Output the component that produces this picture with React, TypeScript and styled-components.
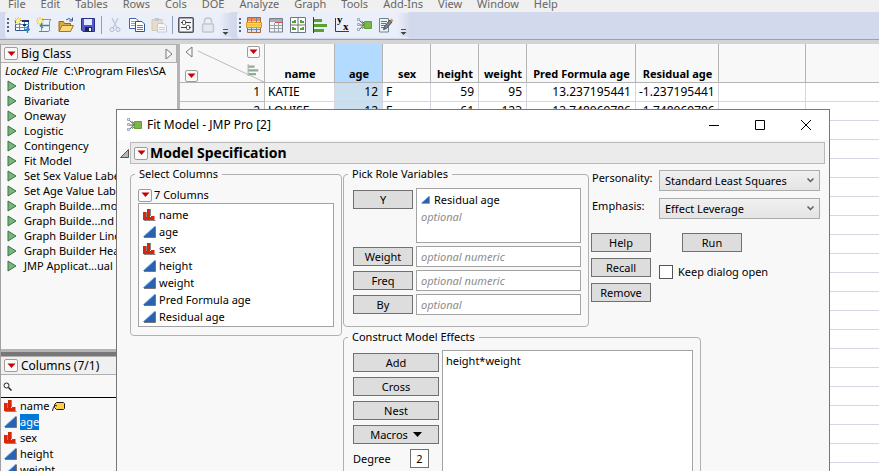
import React from "react";
import styled, { createGlobalStyle, css } from "styled-components";

const GlobalStyle = createGlobalStyle`
  * { box-sizing: border-box; }
  body { margin: 0; }
  body, button, input, select {
    font-family: "Noto Sans", "Open Sans", sans-serif;
    font-size: 11px;
    line-height: 16px;
    color: #000;
  }
  ul { margin: 0; padding: 0; list-style: none; }
  svg { display: block; flex: none; }
`;

const Page = styled.div`
  position: relative;
  display: flex;
  flex-direction: column;
  height: 100vh;
  overflow: hidden;
  background: #fff;
`;

const MenuBar = styled.nav`
  display: flex;
  align-items: flex-end;
  flex: none;
  gap: 3px;
  height: 12px;
  padding-left: 2px;
  background: #f0f0f0;
`;

const MenuItem = styled.button`
  flex: none;
  padding: 0 6px;
  border: 0;
  background: none;
  color: #666;
  white-space: nowrap;
`;

const ToolBar = styled.div`
  display: flex;
  flex: none;
  gap: 5px;
  height: 32px;
  padding-left: 5px;
  background: #d3d9ec;
  border-bottom: 4px solid #d4d4d4;
  box-shadow: inset 0 -1px 0 #92a0c6;
`;

const ToolGroup = styled.div`
  display: flex;
  align-items: center;
  height: 26px;
  background: #ebeff9;
  border-radius: 3px;
`;

const ToolButton = styled.button`
  display: flex;
  align-items: center;
  justify-content: center;
  width: 22px;
  height: 24px;
  padding: 0;
  border: 0;
  background: none;
`;

const Separator = styled.span`
  width: 1px;
  height: 18px;
  margin: 0 2px;
  background: #8e9cbe;
`;

const OverflowButton = styled(ToolButton)`
  width: 13px;
  align-items: flex-end;
  background: linear-gradient(90deg, #ebeff9, #d3d9ec);
`;

const Workspace = styled.div`
  display: flex;
  flex: 1;
  min-height: 0;
`;

const SideBar = styled.aside`
  display: flex;
  flex-direction: column;
  flex: none;
  width: 180px;
  border-left: 1px solid #a0a0a0;
  border-right: 3px solid #b4b4b4;
  background: #f8f8f8;
`;

const PanelHeader = styled.div`
  display: flex;
  align-items: center;
  flex: none;
  gap: 3px;
  height: 19px;
  padding: 0 3px 0 3px;
  border: 1px solid #b0b0b0;
  border-left: 0;
  background: #f0f0f0;
  font-size: 12px;
  white-space: nowrap;
`;

const Spacer = styled.span`
  flex: 1;
`;

const DropButton = styled.button<{ $large?: boolean }>`
  display: flex;
  align-items: center;
  justify-content: center;
  flex: none;
  width: ${(p) => (p.$large ? 14 : 13)}px;
  height: ${(p) => (p.$large ? 13 : 12)}px;
  padding: 0;
  border: 1px solid #9c9c9c;
  border-radius: 2px;
  background: #fafafa;
`;

const ScriptPanel = styled.section`
  flex: 1;
  min-height: 0;
  overflow: hidden;
  white-space: nowrap;
`;

const SourceLine = styled.div`
  display: flex;
  gap: 6px;
  height: 15px;
  padding-left: 4px;
`;

const ScriptItem = styled.li`
  display: flex;
  align-items: center;
  gap: 7px;
  height: 15px;
  padding-left: 6px;
`;

const Splitter = styled.div`
  flex: none;
  height: 7px;
  border-top: 3px solid #b4b4b4;
  background: #777;
`;

const ColumnPanel = styled.section`
  flex: none;
  height: 115px;
  overflow: hidden;
`;

const SearchRow = styled.label`
  display: flex;
  align-items: center;
  height: 23px;
  padding-left: 2px;
  border-bottom: 1px solid #000;
`;

const SearchInput = styled.input`
  flex: 1;
  min-width: 0;
  border: 0;
  outline: 0;
  background: none;
`;

const ColumnItem = styled.li<{ $tall?: boolean }>`
  display: flex;
  align-items: center;
  gap: 3px;
  height: ${(p) => (p.$tall ? 17 : 16)}px;
  padding-left: ${(p) => (p.$tall ? 4 : 3)}px;
`;

const ColumnName = styled.span<{ $selected?: boolean }>`
  ${(p) => p.$selected && css`background: #0078d7; color: #fff;`}
`;

const GridPane = styled.main`
  flex: 1;
  min-width: 0;
  overflow: hidden;
`;

const DataTable = styled.table`
  width: 100%;
  table-layout: fixed;
  border-collapse: separate;
  border-spacing: 0;
`;

const Col = styled.col<{ $w?: number }>`
  width: ${(p) => (p.$w ? `${p.$w}px` : "auto")};
`;

const HeadCell = styled.th<{ $active?: boolean; $last?: boolean }>`
  height: 39px;
  padding: 0 0 0 1px;
  vertical-align: bottom;
  font-size: 11px;
  font-weight: 700;
  white-space: nowrap;
  border-bottom: 1px solid #b4b4b4;
  border-right: ${(p) => (p.$last ? 0 : 1)}px solid #b4b4b4;
  background: ${(p) => (p.$active ? "#b3dbff" : "#f8f8f8")};
`;

const CornerCell = styled(HeadCell)`
  position: relative;
`;

const CornerLayout = styled.div`
  display: flex;
  justify-content: space-between;
  height: 38px;
  padding: 2px 4px 0;
`;

const CornerSide = styled.div`
  display: flex;
  flex-direction: column;
  justify-content: space-between;
`;

const Diagonal = styled.svg`
  position: absolute;
  inset: 0;
  width: 100%;
  height: 100%;
  pointer-events: none;
`;

const Cell = styled.td<{ $text?: boolean; $active?: boolean; $last?: boolean }>`
  height: 19px;
  padding: 0 4px 0 3px;
  font-size: 12px;
  line-height: 18px;
  text-align: ${(p) => (p.$text ? "left" : "right")};
  white-space: nowrap;
  border-bottom: 1px solid #d6d6e0;
  border-right: ${(p) => (p.$last ? 0 : 1)}px solid #d6d6e0;
  background: ${(p) => (p.$active ? "#cbdfef" : "#fff")};
`;

const RowNumber = styled(Cell)`
  background: #f8f8f8;
  border-color: #bcbcbc;
`;

const Dialog = styled.section`
  position: absolute;
  top: 109px;
  left: 116px;
  right: 49px;
  bottom: 0;
  display: flex;
  flex-direction: column;
  border: 1px solid #767676;
  border-bottom: 0;
  background: #f8f8f8;
  overflow: hidden;
`;

const TitleBar = styled.header`
  display: flex;
  align-items: center;
  flex: none;
  height: 30px;
  padding-left: 9px;
  background: #fff;
`;

const Title = styled.span`
  flex: 1;
  padding-left: 5px;
  font-size: 12px;
`;

const WindowButton = styled.button`
  display: flex;
  align-items: center;
  justify-content: center;
  width: 46px;
  height: 30px;
  padding: 0;
  border: 0;
  background: none;
`;

const HeadingRow = styled.div`
  display: flex;
  align-items: center;
  flex: none;
  gap: 1px;
  padding: 2px 4px 0 3px;
`;

const Heading = styled.h1`
  display: flex;
  align-items: center;
  flex: 1;
  gap: 2px;
  height: 22px;
  margin: 0;
  padding-left: 3px;
  border: 1px solid #b9b9b9;
  background: #ebebeb;
  font-size: 14px;
  line-height: 20px;
`;

const Form = styled.form`
  display: flex;
  align-items: flex-start;
  gap: 1px;
  padding: 2px 9px 0 13px;
`;

const MainColumn = styled.div`
  flex: 1;
  min-width: 0;
`;

const TopRow = styled.div`
  display: flex;
  gap: 2px;
  margin-bottom: 2px;
`;

const Group = styled.fieldset<{ $w: number; $h: number }>`
  flex: none;
  width: ${(p) => p.$w}px;
  height: ${(p) => p.$h}px;
  min-width: 0;
  margin: 0;
  padding: 0 7px;
  border: 1px solid #b0b0b0;
  border-radius: 4px;
`;

const Legend = styled.legend`
  padding: 0 4px;
  margin-left: -3px;
`;

const CountRow = styled.div`
  display: flex;
  align-items: center;
  gap: 2px;
  height: 21px;
  padding: 5px 0 0 0;
`;

const listFrame = css`
  border: 1px solid #a3a3a3;
  background: #fff;
`;

const ColumnList = styled.ul`
  ${listFrame}
  height: 124px;
  padding-top: 2px;
`;

const RoleGrid = styled.div`
  display: grid;
  grid-template-columns: 60px 1fr;
  gap: 3px;
  align-items: center;
  padding: 6px 0 0 2px;
`;

const Button = styled.button<{ $top?: boolean }>`
  display: flex;
  align-items: center;
  justify-content: center;
  gap: 5px;
  width: 100%;
  height: 19px;
  padding: 0;
  border: 1px solid #707070;
  background: #ddd;
  ${(p) => p.$top && css`align-self: start; margin-top: 2px;`}
`;

const RoleList = styled.ul`
  ${listFrame}
  height: 55px;
  padding: 2px 0 0 4px;
`;

const RoleItem = styled.li<{ $hint?: boolean }>`
  display: flex;
  align-items: center;
  gap: 4px;
  height: 17px;
  ${(p) => p.$hint && css`font-style: italic; color: #8c8c8c;`}
`;

const RoleInput = styled.input`
  ${listFrame}
  width: 100%;
  height: 21px;
  padding: 0 4px;
  &::placeholder { font-style: italic; color: #8c8c8c; opacity: 1; }
`;

const EffectsLayout = styled.div`
  display: flex;
  align-items: flex-start;
  gap: 3px;
  padding: 5px 0 0 2px;
`;

const EffectButtons = styled.div`
  display: flex;
  flex-direction: column;
  gap: 5px;
  width: 86px;
  padding-top: 3px;
`;

const DegreeRow = styled.label`
  display: flex;
  align-items: center;
  justify-content: space-between;
  padding-right: 10px;
`;

const DegreeInput = styled.input`
  ${listFrame}
  border-color: #707070;
  width: 19px;
  height: 19px;
  padding: 0;
  text-align: center;
`;

const EffectsList = styled.ul`
  ${listFrame}
  flex: 1;
  height: 180px;
  padding: 2px 3px;
`;

const Controls = styled.div`
  display: flex;
  flex-direction: column;
  flex: 1;
  min-width: 0;
  padding-top: 4px;
`;

const ChoiceRow = styled.label`
  display: grid;
  grid-template-columns: 66px 1fr;
  gap: 1px;
  height: 28px;
  padding-left: 1px;
`;

const SelectWrap = styled.span`
  display: grid;
  height: 21px;
  & > * { grid-area: 1 / 1; }
  & > svg { align-self: center; justify-self: end; margin-right: 6px; pointer-events: none; }
`;

const Select = styled.select`
  appearance: none;
  width: 100%;
  height: 21px;
  padding: 0 16px 0 5px;
  border: 1px solid #acacac;
  border-radius: 0;
  background: linear-gradient(#f0f0f0, #e4e4e4);
`;

const ActionRow = styled.div`
  display: flex;
  align-items: flex-start;
  padding-top: 7px;
`;

const ActionColumn = styled.div<{ $wide?: boolean }>`
  display: flex;
  flex-direction: column;
  gap: ${(p) => (p.$wide ? 10 : 6)}px;
  width: ${(p) => (p.$wide ? "auto" : "60px")};
  margin-left: ${(p) => (p.$wide ? 8 : 0)}px;
`;

const RunSlot = styled.div`
  width: 60px;
  margin-left: 23px;
`;

const CheckLabel = styled.label`
  display: flex;
  align-items: center;
  gap: 5px;
  height: 20px;
  white-space: nowrap;
`;

const CheckBox = styled.input`
  appearance: none;
  width: 14px;
  height: 14px;
  margin: 0;
  border: 1px solid #555;
  background: #fff;
  &:checked { background: #555; }
`;

const RedTriangle = () => (
  <svg width="9" height="6" viewBox="0 0 9 6"><path d="M0.5 0.5H8.5L4.5 5Z" fill="#c80000" /></svg>
);

const NominalIcon = () => (
  <svg width="13" height="12" viewBox="0 0 13 12">
    <path d="M1 11H12.500V12H1Z" fill="#888" />
    <path d="M0 3H3V11H0ZM4 0H7V11H4ZM8 7H11.500V11H8ZM3 8H8V11H3Z" fill="#d92606" />
    <path d="M3.500 3V8M7.500 0V7" stroke="#888" />
  </svg>
);

const ContinuousIcon = ({ size = 12 }: { size?: number }) => (
  <svg width={size + 1} height={size} viewBox="0 0 13 12">
    <path d="M1 11.500H12.500V0.500" fill="none" stroke="#777" />
    <path d="M0 11L12 0V11Z" fill="#2a62b2" />
    <path d="M0.500 10.500L11.500 0.500" stroke="#7db0ea" />
  </svg>
);

const PlayIcon = () => (
  <svg width="10" height="12" viewBox="0 0 10 12">
    <path d="M1 1L9 6L1 11Z" fill="#74b87a" stroke="#41704a" />
  </svg>
);

const HollowTriangle = ({ flip }: { flip?: boolean }) => (
  <svg width="8" height="12" viewBox="0 0 8 12">
    <path d={flip ? "M7 1V11L1 6Z" : "M1 1V11L7 6Z"} fill="#f8f8f8" stroke="#777" />
  </svg>
);

const FitIcon = () => (
  <svg width="16" height="16" viewBox="0 0 16 16">
    <path d="M3 3L8 7.500L3 13M3 8H9M6 4.500L9 7M6 11.500L9 9" fill="none" stroke="#555" />
    <path d="M1.500 1.500h2v2h-2zM1.500 6.500h2v2h-2zM1.500 11.500h2v2h-2z" fill="#eef2fb" stroke="#9aa9c8" />
    <path d="M8.500 4.500H15.500V11.500H8.500Z" fill="#7ab648" stroke="#5ea033" />
  </svg>
);

const BarsIcon = ({ muted }: { muted?: boolean }) => (
  <svg width={muted ? 12 : 16} height={muted ? 12 : 16} viewBox="0 0 16 16">
    <path d="M1.500 0V16" stroke={muted ? "#8290a4" : "#253a5e"} strokeWidth="1" />
    <path d="M2 2H10V5H2ZM2 7H15V10H2ZM2 12H12V15H2Z" fill={muted ? "#91ac94" : "#5aa02c"} />
  </svg>
);

const Sparkle = () => (
  <>
    <path d="M4 0V8M0 4H8M1 1L7 7M7 1L1 7" stroke="#eec22c" />
    <circle cx="4" cy="4" r="2" fill="#fff3a0" />
  </>
);

const ToolSvg = ({ children }: { children: React.ReactNode }) => (
  <svg width="16" height="16" viewBox="0 0 16 16" fill="none">{children}</svg>
);

const NewTableIcon = () => (
  <ToolSvg>
    <path d="M1.500 3.500H14.500V13.500H1.500Z" fill="#fff" stroke="#35588c" />
    <path d="M1 7.500H15M1 10.500H15M5.500 3V13M10.500 3V13" stroke="#5f8cc6" />
    <path d="M8 3H15V5H8ZM9 7H12V9H9Z" fill="#20365f" />
    <path d="M10 12.500H16M13.500 9V16" stroke="#1e8fd0" strokeWidth="1.500" />
    <Sparkle />
  </ToolSvg>
);
const NewScriptIcon = () => (
  <ToolSvg>
    <path d="M5.500 2.500H15Q13 4 13.500 6V13Q13.500 14.500 12 14.500H5.500Z" fill="#eef3fa" stroke="#8394ae" />
    <path d="M4 8.500H13M4 8.500L7 6M4 8.500L7 11" stroke="#3c82a8" strokeWidth="1.500" />
    <path d="M3 14.500H12" stroke="#6f7f96" />
    <Sparkle />
  </ToolSvg>
);
const OpenIcon = () => (
  <ToolSvg>
    <path d="M1 14V4.500H5.500L6.500 6.500H12.500V14Z" fill="#d9aa3c" stroke="#8f6c1c" />
    <path d="M1 14.500L4 8.500H15.500L12.500 14.500Z" fill="#fbd97c" stroke="#a27720" />
    <path d="M8 3Q11 0 14 3M14.500 0.500V4H11" stroke="#39608f" />
  </ToolSvg>
);
const SaveIcon = () => (
  <ToolSvg>
    <path d="M1.500 1.500H14.500V14.500H3L1.500 13Z" fill="#5357c9" stroke="#2b2e86" />
    <path d="M4 2H12V8H4Z" fill="#e6e9fb" />
    <path d="M5 10H12V14.500H5Z" fill="#202450" />
    <path d="M9 11H11V14H9Z" fill="#fff" />
  </ToolSvg>
);
const CutIcon = () => (
  <ToolSvg>
    <path d="M5 1L10 11M11 1L6 11" stroke="#c3cbd9" strokeWidth="1.500" />
    <circle cx="5" cy="12.500" r="2" stroke="#a9b9d6" />
    <circle cx="11" cy="12.500" r="2" stroke="#a9b9d6" />
  </ToolSvg>
);
const CopyIcon = () => (
  <ToolSvg>
    <path d="M0.500 1.500H7L9.500 4V11.500H0.500Z" fill="#fff" stroke="#3e68a8" />
    <path d="M2 4.500H7M2 6.500H7M2 8.500H6" stroke="#7fa3d6" />
    <path d="M6.500 4.500H13L15.500 7V14.500H6.500Z" fill="#fff" stroke="#2c5597" />
    <path d="M8 8.500H14M8 10.500H14M8 12.500H14" stroke="#4d7cc0" />
  </ToolSvg>
);
const PasteIcon = () => (
  <ToolSvg>
    <path d="M1 2.500H11V13.500H1Z" fill="#e6dccb" stroke="#d2c8b6" />
    <path d="M4 1H8V4H4Z" fill="#c3c7d0" />
    <path d="M6.500 6.500H13L15.500 9V15H6.500Z" fill="#f4f6fa" stroke="#c2cad8" />
    <path d="M8 10.500H14M8 12.500H14" stroke="#c6cedc" />
  </ToolSvg>
);
const SettingsIcon = () => (
  <ToolSvg>
    <rect x="0.750" y="0.750" width="14.500" height="14.500" rx="1" fill="#f4f5f8" stroke="#53565c" strokeWidth="1.500" />
    <path d="M3 5.500H13M3 10.500H13" stroke="#444" />
    <rect x="4.500" y="3.500" width="3" height="4" rx="1" fill="#fff" stroke="#444" />
    <rect x="8.500" y="8.500" width="3" height="4" rx="1" fill="#fff" stroke="#444" />
  </ToolSvg>
);
const LockIcon = () => (
  <ToolSvg>
    <path d="M4.500 7V4Q4.500 1 8 1T11.500 4V7" stroke="#c2c6d0" strokeWidth="1.500" />
    <rect x="2.500" y="7" width="11" height="8" rx="1" fill="#e6e8ef" stroke="#c2c6d0" strokeWidth="1.500" />
  </ToolSvg>
);
const SummaryIcon = () => (
  <ToolSvg>
    <path d="M1.500 0.500H14.500V15.500H1.500Z" fill="#dbe5f5" stroke="#a46a3c" />
    <path d="M2 1H14V4H2Z" fill="#ee8a62" />
    <path d="M5.500 1V15M10.500 1V15M2 12.500H14" stroke="#6389bb" />
    <path d="M0.500 5.500H15.500V10.500H0.500Z" fill="#ffd84e" stroke="#dc9a1c" />
    <path d="M1 8H15" stroke="#f6a540" />
  </ToolSvg>
);
const TabulateIcon = () => (
  <ToolSvg>
    <path d="M1.500 1.500H14.500V15H1.500Z" fill="#f3f4f7" stroke="#777d88" />
    <path d="M2 2H14V5H2Z" fill="#a7adb8" />
    <path d="M7 5.500H14" stroke="#c8564a" />
    <path d="M2 8.500H14M2 11.500H14M6.500 6V15M10.500 6V15" stroke="#9ba1ab" />
  </ToolSvg>
);
const GraphBuilderIcon = () => (
  <ToolSvg>
    <path d="M0.500 0.500H15.500V15.500H0.500ZM8 0.500V15.500M0.500 8H15.500" fill="#fff" stroke="#6d7580" />
    <path d="M2 6V4H4V3H6V6ZM10 6V3H12V4H14V6ZM2 13V10H4V11H6V13ZM10 13V11H12V10H14V13Z" fill="#5aa02c" />
  </ToolSvg>
);
const AxisText = styled.text`
  font: 700 11px "Liberation Serif", serif;
`;
const FitYXIcon = () => (
  <ToolSvg>
    <path d="M1.500 1V14.500H15" stroke="#2c3e66" />
    <AxisText x="3" y="6" fill="#000">y</AxisText>
    <AxisText x="9" y="13" fill="#000">x</AxisText>
  </ToolSvg>
);
const ScriptEditIcon = () => (
  <ToolSvg>
    <path d="M1.500 1.500H10.500V15H1.500Z" fill="#eef3f7" stroke="#6b8796" />
    <path d="M3 4.500H9M3 6.500H8M3 8.500H7M3 10.500H6" stroke="#4d7f94" />
    <path d="M5.500 12.500L6.500 9.500L12 3L14 5L8.500 11.500Z" fill="#7d8490" stroke="#4a505b" />
    <path d="M12 3L13.500 1.500L15.500 3.500L14 5Z" fill="#e89a35" />
  </ToolSvg>
);
const GripIcon = () => (
  <svg width="6" height="16" viewBox="0 0 6 16">
    <path d="M3 1V15" stroke="#5b6478" strokeWidth="2" strokeDasharray="2 2" />
  </svg>
);
const OverflowIcon = () => (
  <svg width="7" height="8" viewBox="0 0 7 8">
    <path d="M1 0.500H6" stroke="#555" />
    <path d="M0.500 3H6.500L3.500 6Z" fill="#444" />
  </svg>
);
const SearchIcon = () => (
  <svg width="9" height="9" viewBox="0 0 9 9">
    <circle cx="3.500" cy="3.500" r="2.500" fill="none" stroke="#222" />
    <path d="M5.500 5.500L8.500 8.500" stroke="#222" strokeWidth="1.500" />
  </svg>
);
const LabelIcon = () => (
  <svg width="13" height="11" viewBox="0 0 13 11">
    <path d="M4.500 1.500H11.500L12.500 2.500V7.500L11.500 8.500H4.500L2.500 6.500V3.500Z" fill="#ffd044" stroke="#1c1c1c" />
    <path d="M5 5L3 4Q1 6 0.500 10" fill="none" stroke="#222" />
  </svg>
);
const Chevron = () => (
  <svg width="7" height="5" viewBox="0 0 7 5"><path d="M0.500 0.500L3.500 3.500L6.500 0.500" fill="none" stroke="#5c5c5c" strokeWidth="1.500" /></svg>
);

const menus = ["File", "Edit", "Tables", "Rows", "Cols", "DOE", "Analyze", "Graph", "Tools", "Add-Ins", "View", "Window", "Help"];

const scripts = [
  "Distribution", "Bivariate", "Oneway", "Logistic", "Contingency", "Fit Model",
  "Set Sex Value Labels", "Set Age Value Labels", "Graph Builde...mooth", "Graph Builde...nd Bar",
  "Graph Builder Line", "Graph Builder Heat", "JMP Applicat...ual",
];

type Column = { name: string; nominal?: boolean };
const columns: Column[] = [
  { name: "name", nominal: true },
  { name: "age" },
  { name: "sex", nominal: true },
  { name: "height" },
  { name: "weight" },
  { name: "Pred Formula age" },
  { name: "Residual age" },
];

const rows = [
  ["KATIE", "12", "F", "59", "95", "13.237195441", "-1.237195441"],
  ["LOUISE", "12", "F", "61", "123", "13.748069786", "-1.748069786"],
];
const gridWidths = [85, 70, 48, 48, 48, 48, 109, 83, 87];
const blankRows = Array.from({ length: 19 }, (_, i) => i);

type Tool = [string, () => React.ReactElement];
const fileTools: Tool[] = [["New table", NewTableIcon], ["New script", NewScriptIcon], ["Open", OpenIcon], ["Save", SaveIcon]];
const editTools: Tool[] = [["Cut", CutIcon], ["Copy", CopyIcon], ["Paste", PasteIcon]];
const tableTools: Tool[] = [["Settings", SettingsIcon], ["Lock", LockIcon]];
const analyzeTools: Tool[] = [
  ["Summary", SummaryIcon], ["Tabulate", TabulateIcon], ["Graph Builder", GraphBuilderIcon], ["Distribution", BarsIcon],
  ["Fit Y by X", FitYXIcon], ["Fit Model", FitIcon], ["Edit script", ScriptEditIcon],
];

const Tools = ({ items }: { items: Tool[] }) => (
  <>
    {items.map(([label, Icon]) => (
      <ToolButton key={label} aria-label={label}><Icon /></ToolButton>
    ))}
  </>
);

const Drop = ({ label, large }: { label: string; large?: boolean }) => (
  <DropButton type="button" aria-label={label} $large={large}><RedTriangle /></DropButton>
);

const TypeIcon = ({ nominal }: { nominal?: boolean }) => (nominal ? <NominalIcon /> : <ContinuousIcon />);

const DataGrid = () => (
  <GridPane>
    <DataTable>
      <colgroup>
        {gridWidths.map((w, i) => <Col key={i} $w={w} />)}
        <Col />
      </colgroup>
      <thead>
        <tr>
          <CornerCell>
            <Diagonal viewBox="0 0 84 38" preserveAspectRatio="none"><path d="M18 7L84 38" stroke="#bbb" /></Diagonal>
            <CornerLayout>
              <CornerSide><HollowTriangle flip /><Drop label="Row menu" /></CornerSide>
              <CornerSide><Drop label="Column menu" /><BarsIcon muted /><span /></CornerSide>
            </CornerLayout>
          </CornerCell>
          {columns.map((c) => <HeadCell key={c.name} $active={c.name === "age"}>{c.name}</HeadCell>)}
          <HeadCell />
          <HeadCell $last />
        </tr>
      </thead>
      <tbody>
        {rows.map((r, i) => (
          <tr key={i}>
            <RowNumber>{i + 1}</RowNumber>
            {r.map((v, j) => <Cell key={j} $text={j === 0 || j === 2} $active={j === 1}>{v}</Cell>)}
            <Cell />
            <Cell $last />
          </tr>
        ))}
        {blankRows.map((i) => (
          <tr key={i}>
            <RowNumber />
            {columns.map((c) => <Cell key={c.name} $active={c.name === "age"} />)}
            <Cell />
            <Cell $last />
          </tr>
        ))}
      </tbody>
    </DataTable>
  </GridPane>
);

const FitModelDialog = () => (
  <Dialog role="dialog" aria-label="Fit Model">
    <TitleBar>
      <FitIcon />
      <Title>Fit Model - JMP Pro [2]</Title>
      <WindowButton aria-label="Minimize">
        <svg width="10" height="10" viewBox="0 0 10 10"><path d="M0 5.500H10" stroke="#000" /></svg>
      </WindowButton>
      <WindowButton aria-label="Maximize">
        <svg width="10" height="10" viewBox="0 0 10 10"><path d="M0.500 0.500H9.500V9.500H0.500Z" fill="none" stroke="#000" /></svg>
      </WindowButton>
      <WindowButton aria-label="Close">
        <svg width="10" height="10" viewBox="0 0 10 10"><path d="M0 0L10 10M10 0L0 10" stroke="#000" /></svg>
      </WindowButton>
    </TitleBar>
    <HeadingRow>
      <svg width="9" height="9" viewBox="0 0 9 9"><path d="M8.500 0.500V8.500H0.500Z" fill="#b5b5b5" stroke="#555" /></svg>
      <Heading><Drop label="Model menu" large />Model Specification</Heading>
    </HeadingRow>
    <Form onSubmit={(e) => e.preventDefault()}>
      <Group $w={212} $h={170}>
        <Legend>Select Columns</Legend>
        <CountRow><Drop label="Columns menu" large />7 Columns</CountRow>
        <ColumnList>
          {columns.map((c) => (
            <ColumnItem key={c.name} $tall>
              <TypeIcon nominal={c.nominal} />
              <ColumnName>{c.name}</ColumnName>
            </ColumnItem>
          ))}
        </ColumnList>
      </Group>
      <MainColumn>
        <TopRow>
          <Group $w={246} $h={161}>
            <Legend>Pick Role Variables</Legend>
            <RoleGrid>
              <Button type="button" $top>Y</Button>
              <RoleList>
                <RoleItem><ContinuousIcon size={8} />Residual age</RoleItem>
                <RoleItem $hint>optional</RoleItem>
              </RoleList>
              <Button type="button">Weight</Button>
              <RoleInput aria-label="Weight" placeholder="optional numeric" />
              <Button type="button">Freq</Button>
              <RoleInput aria-label="Freq" placeholder="optional numeric" />
              <Button type="button">By</Button>
              <RoleInput aria-label="By" placeholder="optional" />
            </RoleGrid>
          </Group>
          <Controls>
            <ChoiceRow>
              <span>Personality:</span>
              <SelectWrap>
                <Select><option>Standard Least Squares</option></Select>
                <Chevron />
              </SelectWrap>
            </ChoiceRow>
            <ChoiceRow>
              <span>Emphasis:</span>
              <SelectWrap>
                <Select><option>Effect Leverage</option></Select>
                <Chevron />
              </SelectWrap>
            </ChoiceRow>
            <ActionRow>
              <ActionColumn>
                <Button type="button">Help</Button>
                <Button type="button">Recall</Button>
                <Button type="button">Remove</Button>
              </ActionColumn>
              <ActionColumn $wide>
                <RunSlot><Button type="submit">Run</Button></RunSlot>
                <CheckLabel><CheckBox type="checkbox" />Keep dialog open</CheckLabel>
              </ActionColumn>
            </ActionRow>
          </Controls>
        </TopRow>
        <Group $w={358} $h={240}>
          <Legend>Construct Model Effects</Legend>
          <EffectsLayout>
            <EffectButtons>
              <Button type="button">Add</Button>
              <Button type="button">Cross</Button>
              <Button type="button">Nest</Button>
              <Button type="button">
                Macros
                <svg width="9" height="5" viewBox="0 0 9 5"><path d="M0 0H9L4.500 5Z" fill="#000" /></svg>
              </Button>
              <DegreeRow>Degree<DegreeInput defaultValue="2" /></DegreeRow>
            </EffectButtons>
            <EffectsList><li>height*weight</li></EffectsList>
          </EffectsLayout>
        </Group>
      </MainColumn>
    </Form>
  </Dialog>
);

export default function App() {
  return (
    <>
      <GlobalStyle />
      <Page>
        <MenuBar>{menus.map((m) => <MenuItem key={m}>{m}</MenuItem>)}</MenuBar>
        <ToolBar>
          <ToolGroup>
            <GripIcon />
            <Tools items={fileTools} />
            <Separator />
            <Tools items={editTools} />
            <Separator />
            <Tools items={tableTools} />
            <OverflowButton aria-label="More table tools"><OverflowIcon /></OverflowButton>
          </ToolGroup>
          <ToolGroup>
            <GripIcon />
            <Tools items={analyzeTools} />
            <OverflowButton aria-label="More analysis tools"><OverflowIcon /></OverflowButton>
          </ToolGroup>
        </ToolBar>
        <Workspace>
          <SideBar>
            <PanelHeader><Drop label="Table menu" large />Big Class<Spacer /><HollowTriangle /></PanelHeader>
            <ScriptPanel>
              <SourceLine><em>Locked File</em><span>C:\Program Files\SA</span></SourceLine>
              <ul>
                {scripts.map((s) => <ScriptItem key={s}><PlayIcon />{s}</ScriptItem>)}
              </ul>
            </ScriptPanel>
            <Splitter />
            <ColumnPanel>
              <PanelHeader><Drop label="Columns panel menu" large />Columns (7/1)</PanelHeader>
              <SearchRow><SearchIcon /><SearchInput aria-label="Search columns" /></SearchRow>
              <ul>
                {columns.slice(0, 5).map((c) => (
                  <ColumnItem key={c.name}>
                    <TypeIcon nominal={c.nominal} />
                    <ColumnName $selected={c.name === "age"}>{c.name}</ColumnName>
                    {c.name === "name" && <LabelIcon />}
                  </ColumnItem>
                ))}
              </ul>
            </ColumnPanel>
          </SideBar>
          <DataGrid />
        </Workspace>
        <FitModelDialog />
      </Page>
    </>
  );
}
